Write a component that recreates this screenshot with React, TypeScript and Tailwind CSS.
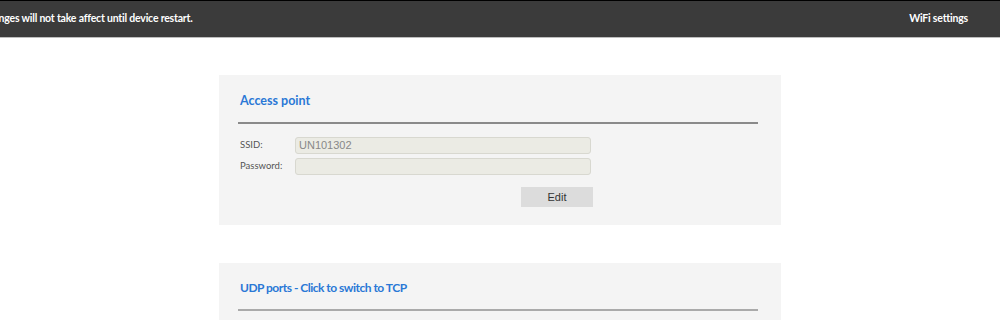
export default function App() {
  return (
    <div className="flex h-[320px] flex-col overflow-hidden bg-white font-['Lato',sans-serif]">
      <div className="h-px shrink-0 bg-black" />
      <header className="flex h-[36px] shrink-0 items-center justify-between overflow-hidden bg-[#3b3b3b] text-white">
        <span className="ml-[-19px] whitespace-nowrap text-[10.5px] font-bold tracking-[-0.2px]">
          Changes will not take affect until device restart.
        </span>
        <span className="mr-[32px] text-[10.5px] font-bold tracking-[-0.2px]">WiFi settings</span>
      </header>
      <div className="h-px shrink-0 bg-[#bdbdbd]" />

      <main className="flex flex-1 flex-col items-center gap-[38px] pt-[37px]">
        <section className="h-[150px] w-[562px] shrink-0 bg-[#f4f4f4] pl-[19px] pr-[23px]">
          <h2 className="pl-[2px] pt-[17px] text-[12.5px] font-bold text-[#2a78d6]">Access point</h2>
          <div className="mt-[11px] h-[2px] bg-[#8a8a8a]" />
          <div className="mt-[13px] flex flex-col gap-[4px] pl-[2px] font-['Liberation_Sans',sans-serif]">
            <div className="flex items-center">
              <label className="w-[55px] font-['Lato',sans-serif] text-[9.5px] text-[#555]">SSID:</label>
              <div className="flex h-[17px] w-[296px] items-center rounded-[3px] border border-[#d8d8d0] bg-[#ebebe4] px-[3px] text-[11px] text-[#888]">
                UN101302
              </div>
            </div>
            <div className="flex items-center">
              <label className="w-[55px] font-['Lato',sans-serif] text-[9.5px] text-[#555]">Password:</label>
              <div className="h-[17px] w-[296px] rounded-[3px] border border-[#d8d8d0] bg-[#ebebe4]" />
            </div>
          </div>
          <div className="mt-[12px] flex pl-[283px]">
            <button className="h-[20px] w-[72px] bg-[#dcdcdc] font-['Liberation_Sans',sans-serif] text-[11px] text-[#333]">
              Edit
            </button>
          </div>
        </section>

        <section className="h-[150px] w-[562px] shrink-0 bg-[#f4f4f4] pl-[19px] pr-[23px]">
          <h2 className="pl-[2px] pt-[16px] text-[12px] font-bold tracking-[-0.5px] text-[#2a78d6]">
            UDP ports - Click to switch to TCP
          </h2>
          <div className="mt-[12px] h-[2px] bg-[#aaaaaa]" />
        </section>
      </main>
      <div className="h-[3px] shrink-0 bg-black" />
    </div>
  );
}
